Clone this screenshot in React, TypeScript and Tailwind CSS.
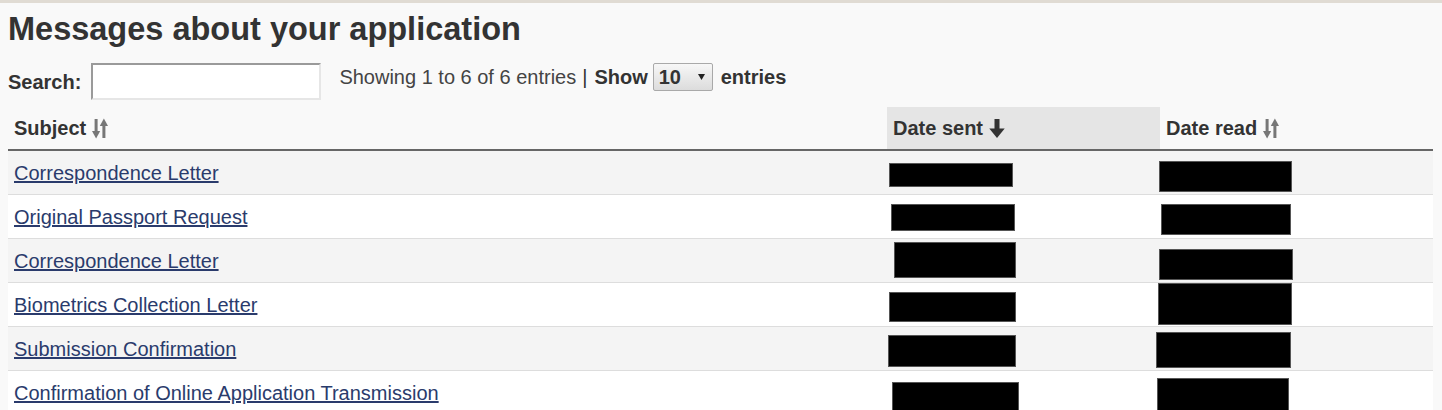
import React from "react";

type Row = { subject: string; sent: string; read: string; bg: string };

const rows: Row[] = [
  {
    subject: "Correspondence Letter",
    sent: "left-[2px] top-[12px] w-[124px] h-[24px]",
    read: "left-[-1px] top-[10px] w-[133px] h-[31px]",
    bg: "bg-[#f4f4f4]",
  },
  {
    subject: "Original Passport Request",
    sent: "left-[4px] top-[9px] w-[124px] h-[27px]",
    read: "left-[1px] top-[9px] w-[130px] h-[31px]",
    bg: "bg-white",
  },
  {
    subject: "Correspondence Letter",
    sent: "left-[7px] top-[3px] w-[122px] h-[36px]",
    read: "left-[-1px] top-[10px] w-[134px] h-[31px]",
    bg: "bg-[#f4f4f4]",
  },
  {
    subject: "Biometrics Collection Letter",
    sent: "left-[2px] top-[9px] w-[127px] h-[30px]",
    read: "left-[-2px] top-[0px] w-[134px] h-[42px]",
    bg: "bg-white",
  },
  {
    subject: "Submission Confirmation",
    sent: "left-[1px] top-[8px] w-[128px] h-[32px]",
    read: "left-[-4px] top-[5px] w-[135px] h-[36px]",
    bg: "bg-[#f4f4f4]",
  },
  {
    subject: "Confirmation of Online Application Transmission",
    sent: "left-[5px] top-[11px] w-[127px] h-[30px]",
    read: "left-[-3px] top-[7px] w-[132px] h-[34px]",
    bg: "bg-white",
  },
];

function SortBoth() {
  return (
    <svg width="16" height="21" viewBox="0 0 16 21" className="ml-[6px]">
      <g fill="#777777">
        <rect x="2.6" y="1" width="3" height="14" />
        <polygon points="0,13 8.2,13 4.1,20.5" />
        <rect x="10.4" y="6" width="3" height="14" />
        <polygon points="7.8,8 16,8 11.9,0.5" />
      </g>
    </svg>
  );
}

function SortDown() {
  return (
    <svg width="16" height="21" viewBox="0 0 16 21" className="ml-[6px]">
      <g fill="#333333">
        <rect x="5.5" y="1" width="5" height="11" />
        <polygon points="0.3,10.5 15.7,10.5 8,20" />
      </g>
    </svg>
  );
}

function Redact({ cls }: { cls: string }) {
  return <div className={`absolute bg-black border border-[#555] ${cls}`} />;
}

export default function App() {
  return (
    <div className="min-h-[410px] bg-[#f9f9f9] border-t-[3px] border-[#e0dbd3] font-['Liberation_Sans',Arial,sans-serif] text-[#333]">
      <div className="pl-[8px] pr-[9px]">
        <h1 className="mt-[8px] text-[32.5px] leading-[36px] font-bold text-[#333]">
          Messages about your application
        </h1>

        <div className="mt-[16px] flex h-[37px] items-start text-[20px] leading-[24px]">
          <div className="flex h-[37px] items-center">
            <span className="font-bold text-[#333]">Search:</span>
            <div className="ml-[10px] h-[37px] w-[230px] bg-white border-2 border-t-[#9a9a9a] border-l-[#9a9a9a] border-b-[#e6e6e6] border-r-[#e6e6e6]" />
          </div>
          <div className="flex h-[28px] items-center">
            <span className="ml-[18px] text-[#444]">Showing 1 to 6 of 6 entries</span>
            <span className="ml-[6px] text-[#333]">|</span>
            <span className="ml-[7px] font-bold text-[#333]">Show</span>
            <div className="ml-[5px] flex h-[28px] w-[60px] items-center justify-between rounded-[2px] border border-[#a9a9a9] bg-linear-to-b from-[#f7f7f7] to-[#dcdcdc] pl-[5px] pr-[7px]">
              <span className="font-bold text-[#333]">10</span>
              <svg width="7" height="6" viewBox="0 0 7 6">
                <polygon points="0,0 7,0 3.5,6" fill="#222" />
              </svg>
            </div>
            <span className="ml-[8px] font-bold text-[#333]">entries</span>
          </div>
        </div>

        <div className="mt-[7px] text-[20px] leading-[24px]">
          <div className="flex h-[44px] border-b-2 border-[#666]">
            <div className="flex w-[879px] items-center pl-[6px] font-bold text-[#333]">
              Subject
              <SortBoth />
            </div>
            <div className="flex w-[273px] items-center bg-[#e5e5e5] pl-[6px] font-bold text-[#333]">
              Date sent
              <SortDown />
            </div>
            <div className="flex flex-1 items-center pl-[6px] font-bold text-[#333]">
              Date read
              <SortBoth />
            </div>
          </div>

          {rows.map((r, i) => (
            <div key={i} className={`flex h-[44px] border-b border-[#dddddd] ${r.bg}`}>
              <div className="flex w-[879px] items-center pl-[6px] pt-[1px]">
                <a href="#" className="text-[#2a3b6c] underline">
                  {r.subject}
                </a>
              </div>
              <div className="relative w-[273px]">
                <Redact cls={r.sent} />
              </div>
              <div className="relative flex-1">
                <Redact cls={r.read} />
              </div>
            </div>
          ))}
        </div>
      </div>
    </div>
  );
}
